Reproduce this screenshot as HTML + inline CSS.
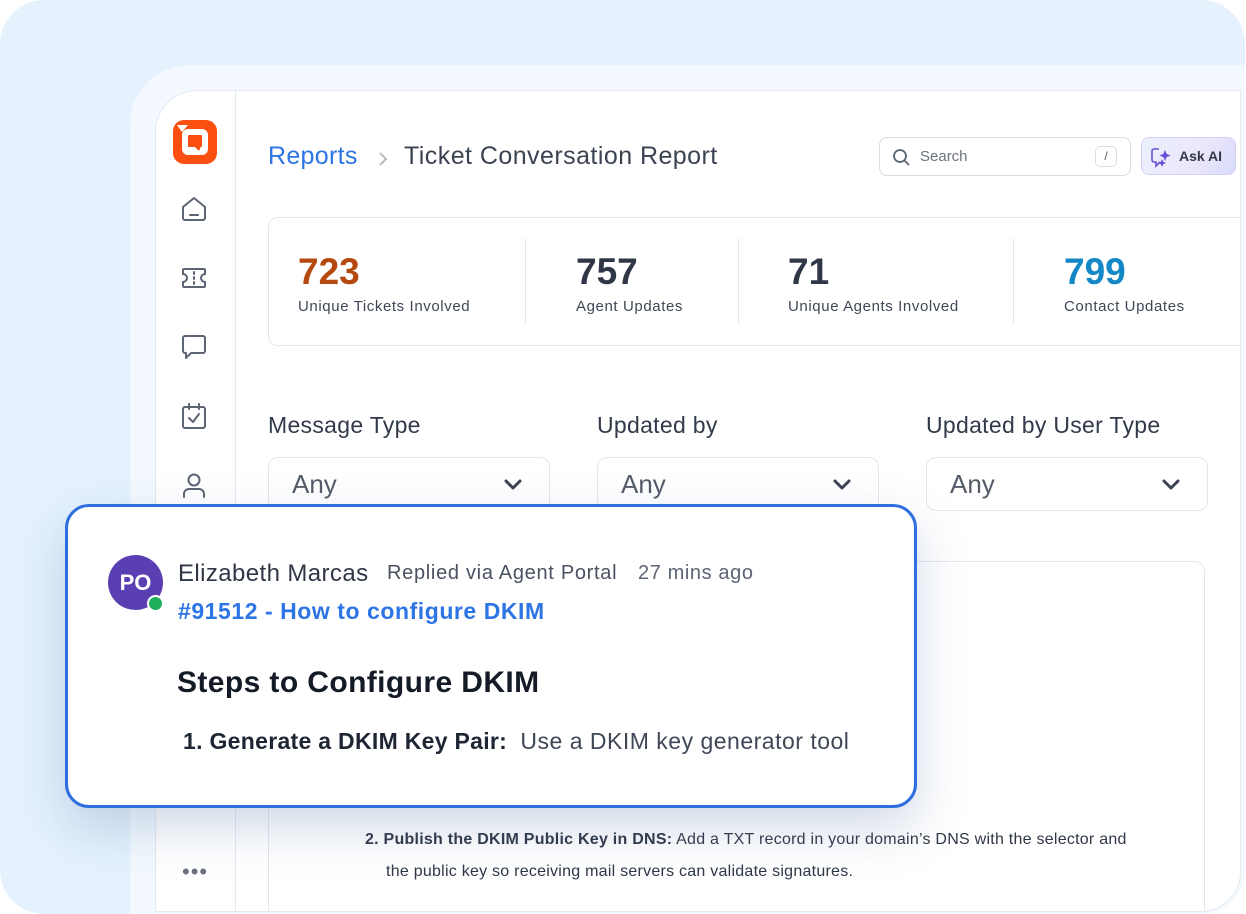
<!DOCTYPE html>
<html><head><meta charset="utf-8"><style>
*{box-sizing:border-box;margin:0;padding:0}
html,body{width:1246px;height:914px;overflow:hidden}
body{background:#fff;font-family:"Liberation Sans",sans-serif;position:relative}
.outer{position:absolute;left:0;top:0;width:1245px;height:914px;background:#e5f2fd;border-radius:44px;overflow:hidden}
.mid{position:absolute;left:130px;top:65px;width:1200px;height:900px;background:#f3f9fe;border-radius:60px 0 0 0}
.app{position:absolute;left:155px;top:90px;width:1086px;height:822px;background:#fff;border:1.5px solid #e6e9ee;border-radius:42px 0 40px 0;overflow:hidden}
.side{position:absolute;left:0;top:0;width:80px;height:100%;border-right:1.5px solid #e6e9ee}
.abs{position:absolute}
.txt{position:absolute;white-space:nowrap}
.stat{position:absolute;left:112px;top:126px;width:1000px;height:129px;border:1.5px solid #e4e7eb;border-radius:10px}
.num{position:absolute;top:33px;font-size:37px;font-weight:bold;color:#2f3747}
.lab{position:absolute;top:80px;font-size:15px;letter-spacing:.6px;color:#3f4756}
.div{position:absolute;top:20px;width:1px;height:86px;background:#e6e8ec}
.flab{position:absolute;top:321px;font-size:23px;letter-spacing:.3px;color:#323a4a}
.sel{position:absolute;top:366px;width:282px;height:54px;border:1.5px solid #e4e7eb;border-radius:10px}
.sel span{position:absolute;left:23px;top:11px;font-size:26px;color:#545b68}
.sel svg{position:absolute;right:26px;top:20px}
.pop{position:absolute;left:65px;top:504px;width:852px;height:304px;background:#fff;border:3px solid #2d6fe0;border-radius:24px;box-shadow:0 20px 50px rgba(90,120,170,.28)}
</style></head><body>
<div class="outer">
<div class="mid"></div>
<div class="app">
 <div class="side">
  <svg class="abs" style="left:16px;top:28px" width="46" height="46" viewBox="0 0 46 46"><rect x="1" y="1" width="44" height="44" rx="11" fill="#fb4f12"/><rect x="10" y="10" width="26" height="26" rx="6" fill="#fff"/><path d="M5 6 L16 6 L10 13 Z" fill="#fff"/><rect x="16" y="16" width="14" height="12" rx="1" fill="#fb4f12"/><path d="M22 27 L29 27 L27 32Z" fill="#fb4f12"/></svg>
  <svg class="abs" style="left:24px;top:104px" width="28" height="28" viewBox="0 0 28 28" fill="none" stroke="#5d6474" stroke-width="2" stroke-linejoin="round"><path d="M3 12 L14 3 L25 12 V23 a2 2 0 0 1 -2 2 H5 a2 2 0 0 1 -2 -2 Z"/><path d="M10 20 H18" stroke-linecap="round"/></svg>
  <svg class="abs" style="left:24px;top:173px" width="28" height="28" viewBox="0 0 28 28" fill="none" stroke="#5d6474" stroke-width="2"><path d="M4 5 H24 a1 1 0 0 1 1 1 V10 a4 4 0 0 0 0 8 V22 a1 1 0 0 1 -1 1 H4 a1 1 0 0 1 -1 -1 V18 a4 4 0 0 0 0 -8 V6 a1 1 0 0 1 1 -1Z"/><path d="M14 8 V10 M14 13 V15 M14 18 V20" stroke-linecap="round"/></svg>
  <svg class="abs" style="left:24px;top:242px" width="28" height="30" viewBox="0 0 28 30" fill="none" stroke="#5d6474" stroke-width="2" stroke-linejoin="round"><path d="M5 3 H23 a2 2 0 0 1 2 2 V18 a2 2 0 0 1 -2 2 H11 L6 25 V20 H5 a2 2 0 0 1 -2 -2 V5 a2 2 0 0 1 2 -2Z"/></svg>
  <svg class="abs" style="left:24px;top:310px" width="28" height="30" viewBox="0 0 28 30" fill="none" stroke="#5d6474" stroke-width="2" stroke-linecap="round" stroke-linejoin="round"><rect x="3" y="6" width="22" height="21" rx="2"/><path d="M9 3 V8 M19 3 V8 M9 17 L13 21 L19 13"/></svg>
  <svg class="abs" style="left:24px;top:380px" width="28" height="30" viewBox="0 0 28 30" fill="none" stroke="#5d6474" stroke-width="2" stroke-linecap="round"><circle cx="14" cy="9" r="5.5"/><path d="M4 26 V23 a5 5 0 0 1 5 -5 H19 a5 5 0 0 1 5 5 V26"/></svg>
  <div class="txt" style="left:26px;top:768px;font-size:22px;color:#6b7280;letter-spacing:1px">•••</div>
 </div>
 <div class="txt" style="left:112px;top:51px;font-size:25px;letter-spacing:.3px;color:#2d74e4">Reports</div>
 <svg class="abs" style="left:220px;top:59px" width="14" height="18" viewBox="0 0 14 18" fill="none" stroke="#b5bac3" stroke-width="2"><path d="M4 3 L10 9 L4 15"/></svg>
 <div class="txt" style="left:248px;top:51px;font-size:25px;letter-spacing:.45px;color:#3b4352">Ticket Conversation Report</div>
 <div class="abs" style="left:723px;top:46px;width:252px;height:39px;border:1.5px solid #d9dde3;border-radius:8px">
  <svg class="abs" style="left:12px;top:10px" width="18" height="18" viewBox="0 0 18 18" fill="none" stroke="#5d6474" stroke-width="1.8"><circle cx="8" cy="8" r="6"/><path d="M12.5 12.5 L16.5 16.5" stroke-linecap="round"/></svg>
  <div class="txt" style="left:40px;top:10px;font-size:15px;color:#6b7280">Search</div>
  <div class="abs" style="left:215px;top:8px;width:22px;height:21px;border:1.5px solid #d9dde3;border-radius:5px;font-size:12px;color:#555;text-align:center;line-height:18px">/</div>
 </div>
 <div class="abs" style="left:985px;top:46px;width:95px;height:38px;border:1.5px solid #d8cff5;border-radius:8px;background:linear-gradient(120deg,#eaf1fd,#ece6fb 60%,#d7dcfb)">
  <svg class="abs" style="left:8px;top:8px" width="22" height="22" viewBox="0 0 22 22" fill="none" stroke="#6b4fd8" stroke-width="1.6"><path d="M9 3 H4 a2 2 0 0 0 -2 2 V14 a2 2 0 0 0 2 2 H6 L6 20 L10 16"/><path d="M15 6 l1 2.5 2.5 1 -2.5 1 -1 2.5 -1 -2.5 -2.5 -1 2.5 -1Z" fill="#6b4fd8"/><path d="M12 15 l.6 1.4 1.4.6 -1.4.6 -.6 1.4 -.6 -1.4 -1.4 -.6 1.4 -.6Z" fill="#6b4fd8"/></svg>
  <div class="txt" style="left:37px;top:10px;font-size:14px;font-weight:bold;color:#333b4a">Ask AI</div>
 </div>
 <div class="stat">
  <div class="num" style="left:29px;color:#b5490f">723</div><div class="lab" style="left:29px">Unique Tickets Involved</div>
  <div class="div" style="left:256px"></div>
  <div class="num" style="left:307px">757</div><div class="lab" style="left:307px">Agent Updates</div>
  <div class="div" style="left:469px"></div>
  <div class="num" style="left:519px">71</div><div class="lab" style="left:519px">Unique Agents Involved</div>
  <div class="div" style="left:744px"></div>
  <div class="num" style="left:795px;color:#1487c7">799</div><div class="lab" style="left:795px">Contact Updates</div>
  <div class="div" style="left:972px"></div>
 </div>
 <div class="flab" style="left:112px">Message Type</div>
 <div class="flab" style="left:441px">Updated by</div>
 <div class="flab" style="left:770px">Updated by User Type</div>
 <div class="sel" style="left:112px"><span>Any</span><svg width="20" height="14" viewBox="0 0 20 14" fill="none" stroke="#3b4352" stroke-width="3" stroke-linecap="round" stroke-linejoin="round"><path d="M3 3 L10 10 L17 3"/></svg></div>
 <div class="sel" style="left:441px"><span>Any</span><svg width="20" height="14" viewBox="0 0 20 14" fill="none" stroke="#3b4352" stroke-width="3" stroke-linecap="round" stroke-linejoin="round"><path d="M3 3 L10 10 L17 3"/></svg></div>
 <div class="sel" style="left:770px"><span>Any</span><svg width="20" height="14" viewBox="0 0 20 14" fill="none" stroke="#3b4352" stroke-width="3" stroke-linecap="round" stroke-linejoin="round"><path d="M3 3 L10 10 L17 3"/></svg></div>
 <div class="abs" style="left:112px;top:470px;width:937px;height:400px;border:1.5px solid #e4e7eb;border-radius:10px"></div>
 <div class="txt" style="left:209px;top:740px;font-size:16px;letter-spacing:.25px;color:#2f3747"><b>2. Publish the DKIM Public Key in DNS:</b> Add a TXT record in your domain’s DNS with the selector and</div>
 <div class="txt" style="left:230px;top:772px;font-size:16px;letter-spacing:.25px;color:#2f3747">the public key so receiving mail servers can validate signatures.</div>
</div>
</div>
<div class="pop">
 <div class="abs" style="left:40px;top:48px;width:55px;height:55px;border-radius:50%;background:#5a3fb3;color:#fff;font-size:22px;font-weight:bold;text-align:center;line-height:55px">PO</div>
 <div class="abs" style="left:79px;top:88px;width:17px;height:17px;border-radius:50%;background:#1fae5b;border:2.5px solid #fff"></div>
 <div class="txt" style="left:110px;top:53px;font-size:24px;letter-spacing:.4px;color:#2f3747">Elizabeth Marcas</div>
 <div class="txt" style="left:319px;top:55px;font-size:20px;letter-spacing:.7px;color:#4a5160">Replied via Agent Portal</div>
 <div class="txt" style="left:570px;top:55px;font-size:20px;letter-spacing:.6px;color:#5d6474">27 mins ago</div>
 <div class="txt" style="left:110px;top:91px;font-size:23px;letter-spacing:.55px;font-weight:bold;color:#2d74e4">#91512 - How to configure DKIM</div>
 <div class="txt" style="left:109px;top:159px;font-size:30px;letter-spacing:.4px;font-weight:bold;color:#141a26">Steps to Configure DKIM</div>
 <div class="txt" style="left:115px;top:221px;font-size:23px;color:#1e2533"><b style="letter-spacing:.3px">1. Generate a DKIM Key Pair:</b> <span style="color:#3f4756;letter-spacing:.5px">&nbsp;Use a DKIM key generator tool</span></div>
</div>
</body></html>
